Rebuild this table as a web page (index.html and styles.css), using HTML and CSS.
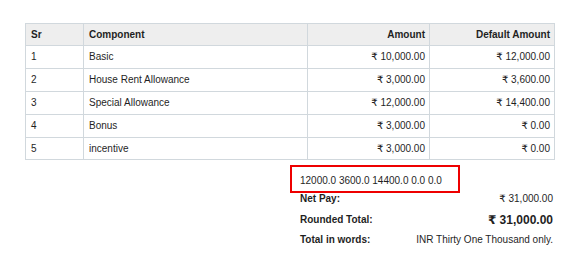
FILE: index.html
```html
<!DOCTYPE html>
<html>
<head>
<meta charset="utf-8">
<link rel="stylesheet" href="styles.css">
</head>
<body>
<div class="page">
  <table class="grid">
    <colgroup>
      <col class="c-sr"><col class="c-comp"><col class="c-amt"><col class="c-def">
    </colgroup>
    <thead>
      <tr><th>Sr</th><th>Component</th><th class="num">Amount</th><th class="num">Default Amount</th></tr>
    </thead>
    <tbody>
      <tr><td>1</td><td>Basic</td><td class="num">₹ 10,000.00</td><td class="num">₹ 12,000.00</td></tr>
      <tr><td>2</td><td>House Rent Allowance</td><td class="num">₹ 3,000.00</td><td class="num">₹ 3,600.00</td></tr>
      <tr><td>3</td><td>Special Allowance</td><td class="num">₹ 12,000.00</td><td class="num">₹ 14,400.00</td></tr>
      <tr><td>4</td><td>Bonus</td><td class="num">₹ 3,000.00</td><td class="num">₹ 0.00</td></tr>
      <tr class="last"><td>5</td><td>incentive</td><td class="num">₹ 3,000.00</td><td class="num">₹ 0.00</td></tr>
    </tbody>
  </table>
  <div class="summary">
    <div class="debug">12000.0 3600.0 14400.0 0.0 0.0</div>
    <div class="row net"><span class="label">Net Pay:</span><span class="value">₹ 31,000.00</span></div>
    <div class="row rounded"><span class="label">Rounded Total:</span><span class="value big">₹ 31,000.00</span></div>
    <div class="row words"><span class="label">Total in words:</span><span class="value">INR Thirty One Thousand only.</span></div>
  </div>
</div>
</body>
</html>
```
FILE: styles.css
```css
html, body {
  margin: 0;
  padding: 0;
  background: #ffffff;
}
body {
  font-family: "Liberation Sans", Arial, "DejaVu Sans", sans-serif;
  font-size: 10px;
  color: #1f1f1f;
}
.page {
  padding: 23px 19px 0 25px;
}
.grid {
  border-collapse: collapse;
  width: 529px;
  table-layout: fixed;
}
.c-sr { width: 58px; }
.c-comp { width: 224px; }
.c-amt { width: 122px; }
.c-def { width: 125px; }
.grid th, .grid td {
  border: 1px solid #d1d8dd;
  padding: 0 4px 0 5px;
  line-height: 12px;
  text-align: left;
  white-space: nowrap;
}
.grid th {
  background: #eeeeee;
  font-weight: bold;
  height: 21px;
  padding-top: 0;
  padding-bottom: 0;
}
.grid td {
  height: 22px;
}
.grid tr.last td {
  height: 21px;
}
.grid .num {
  text-align: right;
}
.summary {
  margin-left: 265px;
  width: 263px;
  padding-top: 5px;
  display: flex;
  flex-direction: column;
  align-items: stretch;
}
.debug {
  align-self: flex-start;
  width: 158px;
  border: 2px solid #ee0000;
  padding: 8px 0 4px 8px;
  line-height: 12px;
}
.row {
  display: flex;
  justify-content: space-between;
  align-items: center;
  padding-left: 10px;
}
.label {
  font-weight: bold;
}
.row.net {
  line-height: 12px;
}
.row.rounded {
  margin-top: 7px;
  line-height: 16px;
}
.row.words {
  margin-top: 6px;
  line-height: 12px;
}
.big {
  font-size: 12px;
  font-weight: bold;
}
```
